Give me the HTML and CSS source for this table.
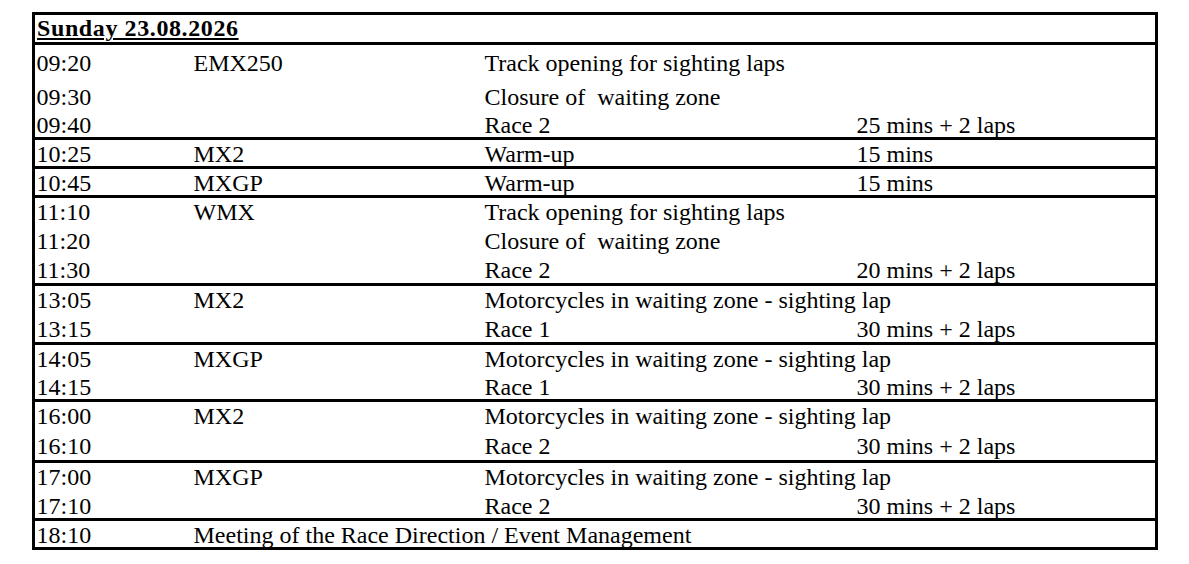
FILE: index.html
```html
<!DOCTYPE html>
<html lang="en">
<head>
<meta charset="utf-8">
<title>Sunday 23.08.2026</title>
<link rel="stylesheet" href="styles.css">
</head>
<body>
<div class="sched">
  <div class="head"><span class="title">Sunday 23.08.2026</span></div>

  <div class="grp g1">
    <div class="row h38 first"><span>09:20</span><span>EMX250</span><span>Track opening for sighting laps</span><span></span></div>
    <div class="row h28"><span>09:30</span><span></span><span>Closure of  waiting zone</span><span></span></div>
    <div class="row h26"><span>09:40</span><span></span><span>Race 2</span><span>25 mins + 2 laps</span></div>
  </div>

  <div class="grp">
    <div class="row h26"><span>10:25</span><span>MX2</span><span>Warm-up</span><span>15 mins</span></div>
  </div>

  <div class="grp">
    <div class="row h26"><span>10:45</span><span>MXGP</span><span>Warm-up</span><span>15 mins</span></div>
  </div>

  <div class="grp">
    <div class="row h29"><span>11:10</span><span>WMX</span><span>Track opening for sighting laps</span><span></span></div>
    <div class="row h29"><span>11:20</span><span></span><span>Closure of  waiting zone</span><span></span></div>
    <div class="row h27"><span>11:30</span><span></span><span>Race 2</span><span>20 mins + 2 laps</span></div>
  </div>

  <div class="grp">
    <div class="row h29"><span>13:05</span><span>MX2</span><span>Motorcycles in waiting zone - sighting lap</span><span></span></div>
    <div class="row h27"><span>13:15</span><span></span><span>Race 1</span><span>30 mins + 2 laps</span></div>
  </div>

  <div class="grp">
    <div class="row h28"><span>14:05</span><span>MXGP</span><span>Motorcycles in waiting zone - sighting lap</span><span></span></div>
    <div class="row h26"><span>14:15</span><span></span><span>Race 1</span><span>30 mins + 2 laps</span></div>
  </div>

  <div class="grp">
    <div class="row h30"><span>16:00</span><span>MX2</span><span>Motorcycles in waiting zone - sighting lap</span><span></span></div>
    <div class="row h28"><span>16:10</span><span></span><span>Race 2</span><span>30 mins + 2 laps</span></div>
  </div>

  <div class="grp">
    <div class="row h29"><span>17:00</span><span>MXGP</span><span>Motorcycles in waiting zone - sighting lap</span><span></span></div>
    <div class="row h26"><span>17:10</span><span></span><span>Race 2</span><span>30 mins + 2 laps</span></div>
  </div>

  <div class="grp last">
    <div class="row h26"><span>18:10</span><span class="wide">Meeting of the Race Direction / Event Management</span></div>
  </div>
</div>
</body>
</html>
```

FILE: styles.css
```css
html, body {
  margin: 0;
  padding: 0;
  background: #ffffff;
}

body {
  font-family: "Liberation Serif", "Times New Roman", serif;
  font-size: 24px;
  color: #000000;
}

.sched {
  box-sizing: border-box;
  width: 1126px;
  margin: 12px 0 0 32px;
  border: 3px solid #000000;
}

.head {
  box-sizing: border-box;
  height: 30px;
  padding: 1px 0 0 2px;
  line-height: 24px;
  border-bottom: 3px solid #000000;
}

.title {
  font-weight: bold;
  letter-spacing: 0.6px;
  text-decoration: underline;
  text-decoration-thickness: 2px;
  text-underline-offset: 2px;
}

.grp {
  border-bottom: 3px solid #000000;
}

.grp.last {
  border-bottom: none;
}

.row {
  box-sizing: border-box;
  display: grid;
  grid-template-columns: 157px 291px 372px 1fr;
  align-items: start;
  padding-top: 2px;
  line-height: 24px;
  white-space: pre;
}

.row.first {
  padding-top: 6px;
}

.row > span {
  padding-left: 1.5px;
}

.row > .wide {
  grid-column: 2 / span 3;
}

.h26 { height: 26px; }
.h27 { height: 27px; }
.h28 { height: 28px; }
.h29 { height: 29px; }
.h30 { height: 30px; }
.h38 { height: 38px; }
```
